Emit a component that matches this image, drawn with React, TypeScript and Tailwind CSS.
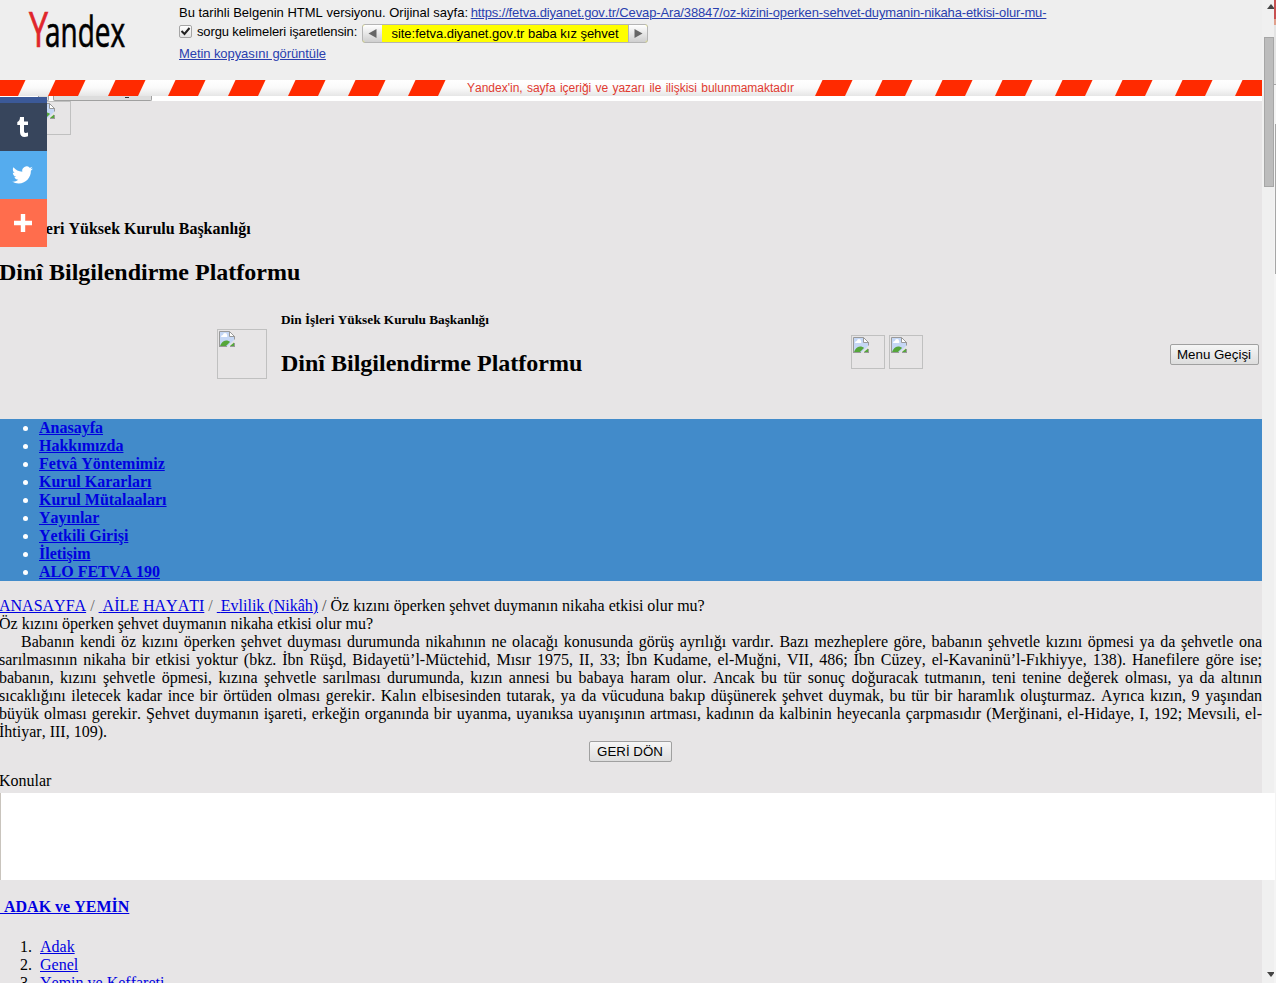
import React from "react";

const menu = [
  'Anasayfa',
  'Hakkımızda',
  'Fetvâ Yöntemimiz',
  'Kurul Kararları',
  'Kurul Mütalaaları',
  'Yayınlar',
  'Yetkili Girişi',
  'İletişim',
  'ALO FETVA 190'
];

const topics = ['Adak', 'Genel', 'Yemin ve Keffareti'];

const answer = [
  'Babanın kendi öz kızını öperken şehvet duyması durumunda nikahının ne olacağı konusunda görüş ayrılığı vardır. Bazı mezheplere göre, babanın şehvetle kızını öpmesi ya da şehvetle ona',
  'sarılmasının nikaha bir etkisi yoktur (bkz. İbn Rüşd, Bidayetü’l-Müctehid, Mısır 1975, II, 33; İbn Kudame, el-Muğni, VII, 486; İbn Cüzey, el-Kavaninü’l-Fıkhiyye, 138). Hanefilere göre ise;',
  'babanın, kızını şehvetle öpmesi, kızına şehvetle sarılması durumunda, kızın annesi bu babaya haram olur. Ancak bu tür sonuç doğuracak tutmanın, teni tenine değerek olması, ya da altının',
  'sıcaklığını iletecek kadar ince bir örtüden olması gerekir. Kalın elbisesinden tutarak, ya da vücuduna bakıp düşünerek şehvet duymak, bu tür bir haramlık oluşturmaz. Ayrıca kızın, 9 yaşından',
  'büyük olması gerekir. Şehvet duymanın işareti, erkeğin organında bir uyanma, uyanıksa uyanışının artması, kadının da kalbinin heyecanla çarpmasıdır (Merğinani, el-Hidaye, I, 192; Mevsıli, el-'
];

const stripes = [-12, 48, 108, 168, 228, 288, 348, 408, 815, 875, 935, 995, 1055, 1115, 1175, 1235];

function BrokenImage({ className }) {
  return (
    <div className={`shrink-0 border border-[#c0c0c0] p-px ${className}`}>
      <svg width="16" height="16" viewBox="0 0 16 16" className="block">
        <path d="M.5.5h10l5 5v3l-7 7h-8z" fill="#c5d7f5" />
        <path d="M2 6a2 2 0 0 1 2-2 2 2 0 0 1 4 0 1.500 1.500 0 0 1 0 2z" fill="#fff" />
        <path d="M1 15c1-3 3-5.500 6-5.500 2 0 3 .5 4 1.500l-4 4z" fill="#55a63a" />
        <path d="M11 15l4-3.500V15z" fill="#55a63a" />
        <path d="M10.500.5v5h5z" fill="#fff" stroke="#999" />
        <path d="M.5 16V.5h10M15.500 5v3.500M0 15.500h8M11 15.500h5M15.500 12v4" fill="none" stroke="#999" />
      </svg>
    </div>
  );
}

function OldButton({ children, className }) {
  return (
    <button className={`h-[21px] shrink-0 rounded-[2px] border border-[#a0a0a0] bg-linear-to-b from-[#f6f6f6] to-[#dddddd] pr-px text-center font-['Liberation_Sans',sans-serif] text-[13.33px] leading-[18px] text-black ${className}`}>
      {children}
    </button>
  );
}

function Tape() {
  return (
    <div className="relative h-4 bg-linear-to-b from-white via-[#fafafa] to-[#e6e6e6]">
      <svg width="1262" height="16" className="block">
        {stripes.map((x) => (
          <polygon key={x} points={`${x},16 ${x + 7.5},0 ${x + 37.5},0 ${x + 30},16`} fill="#ff2a00" />
        ))}
      </svg>
      <div className="absolute left-[467px] top-0 w-[327px] font-['Liberation_Sans',sans-serif] text-[12px] leading-4 text-[#e03a30] [text-align-last:justify] whitespace-nowrap">
        Yandex'in, sayfa içeriği ve yazarı ile ilişkisi bulunmamaktadır
      </div>
    </div>
  );
}

function CacheHeader() {
  return (
    <header className="flex h-20 bg-[#eeeeee] font-['Liberation_Sans',sans-serif] text-[13px] text-black">
      <svg width="179" height="80" className="shrink-0">
        <g fontFamily="'Open Sans', sans-serif" strokeWidth="0.7">
          <text x="29" y="47" fontSize="49" textLength="19" lengthAdjust="spacingAndGlyphs" fill="#e0262b" stroke="#e0262b">Y</text>
          <text x="45" y="47" fontSize="42" textLength="80" lengthAdjust="spacingAndGlyphs" fill="#000" stroke="#000">andex</text>
        </g>
      </svg>
      <div className="pt-1">
        <div className="h-[18px] leading-[18px] whitespace-nowrap">
          Bu tarihli Belgenin HTML versiyonu. Orijinal sayfa:{' '}
          <a className="-ml-px tracking-[-0.13px] text-[#2a3fae] underline">https://fetva.diyanet.gov.tr/Cevap-Ara/38847/oz-kizini-operken-sehvet-duymanin-nikaha-etkisi-olur-mu-</a>
        </div>
        <div className="flex h-[22px] whitespace-nowrap">
          <span className="mt-[3px] flex h-[13px] w-[13px] items-center justify-center rounded-[2px] border border-[#a5a5a5] bg-linear-to-b from-white to-[#e4e4e4]">
            <svg width="11" height="11" viewBox="0 0 11 11"><path d="M1.500 5l3 3L9.500 2" fill="none" stroke="#222" strokeWidth="2" /></svg>
          </span>
          <span className="ml-[5px] w-[165px] tracking-[-0.13px] leading-[20px]">sorgu kelimeleri işaretlensin:</span>
          <div className="mt-[2px] flex h-[19px] w-[286px] overflow-hidden rounded-[3px] border border-[#b5b5b5] bg-[#ffff00]">
            <span className="flex w-[19px] items-center justify-center bg-linear-to-b from-white to-[#cfcfcf]">
              <svg width="9" height="9"><path d="M8.500 0v9L.5 4.500z" fill="#666" /></svg>
            </span>
            <span className="flex-1 text-center tracking-[-0.03px] leading-[17px]">site:fetva.diyanet.gov.tr baba kız şehvet</span>
            <span className="flex w-[19px] items-center justify-center border-l border-[#b5b5b5] bg-linear-to-b from-white to-[#cfcfcf]">
              <svg width="9" height="9"><path d="M.5 0v9l8-4.500z" fill="#666" /></svg>
            </span>
          </div>
        </div>
        <a className="block tracking-[-0.08px] leading-[20px] text-[#2a3fae] underline">Metin kopyasını görüntüle</a>
      </div>
    </header>
  );
}

function ShareBar() {
  return (
    <div className="absolute left-0 top-[97px] w-[47px]">
      <div className="h-[6px] bg-[#3b5998]" />
      <div className="flex h-12 items-center justify-center bg-[#37455c] pr-px">
        <svg width="12" height="20" viewBox="0 0 12 20"><path d="M3 0h4v4.500h4V8H7v6c0 2.200 1.800 2.500 4 1.600v3.600C6.500 21 3 19.500 3 15V8H.3V5C2.200 4.300 2.900 3 3 0z" fill="#fff" /></svg>
      </div>
      <div className="flex h-12 items-center justify-center bg-[#55acee] pr-[2px]">
        <svg width="21" height="22" viewBox="0 0 24 24"><path d="M23.950 4.570a10 10 0 0 1-2.820.77 4.960 4.960 0 0 0 2.160-2.720c-.95.55-2 .96-3.130 1.180a4.920 4.920 0 0 0-8.380 4.480C7.690 8.090 4.070 6.130 1.640 3.160a4.820 4.820 0 0 0-.67 2.480c0 1.710.87 3.210 2.190 4.100a4.900 4.900 0 0 1-2.230-.62v.06a4.920 4.920 0 0 0 3.950 4.830 5 5 0 0 1-2.210.08 4.940 4.940 0 0 0 4.600 3.420A9.870 9.870 0 0 1 0 19.540a14 14 0 0 0 7.550 2.210c9.050 0 14-7.500 14-13.980l-.02-.64a9.940 9.940 0 0 0 2.420-2.560z" fill="#fff" /></svg>
      </div>
      <div className="flex h-12 items-center justify-center bg-[#ff6d4d] pr-px">
        <svg width="18" height="18"><path d="M6.800 0h4.400v6.800H18v4.400h-6.800V18H6.800v-6.800H0V6.800h6.800z" fill="#fff" /></svg>
      </div>
    </div>
  );
}

function SiteHeader() {
  return (
    <>
      <div className="flex h-[5px] bg-white pl-[38px]">
        <div className="h-[5px] w-[11px] rounded-b-[2px] border border-t-0 border-[#a0a0a0] bg-[#dddddd]" />
        <div className="ml-1 flex h-[5px] w-[99px] justify-center rounded-b-[2px] border border-t-0 border-[#a0a0a0] bg-[#dddddd]">
          <div className="ml-12 mt-px h-px w-1 bg-[#333]" />
        </div>
      </div>
      <div className="h-[119px] pl-[37px]">
        <BrokenImage className="h-[34px] w-[34px]" />
      </div>
      <h3 className="h-[18px] text-[16px] leading-[18px] font-bold">Din İşleri Yüksek Kurulu Başkanlığı</h3>
      <h2 className="-ml-px mt-5 h-7 text-[24px] leading-7 font-bold whitespace-nowrap">Dinî Bilgilendirme Platformu</h2>
      <div className="flex h-[133px] pt-[27px]">
        <BrokenImage className="ml-[217px] mt-[16px] h-[50px] w-[50px]" />
        <div className="ml-[14px] w-[570px] shrink-0">
          <h5 className="-mt-px text-[13.28px] leading-[15px] font-bold">Din İşleri Yüksek Kurulu Başkanlığı</h5>
          <h2 className="mt-[22px] text-[24px] leading-7 font-bold">Dinî Bilgilendirme Platformu</h2>
        </div>
        <BrokenImage className="mt-[22px] h-[34px] w-[34px]" />
        <BrokenImage className="ml-1 mt-[22px] h-[34px] w-[34px]" />
        <OldButton className="ml-[247px] mt-[31px] w-[89px]">Menu Geçişi</OldButton>
      </div>
    </>
  );
}

function Scrollbar() {
  return (
    <div className="flex w-[14px] shrink-0 bg-[#f0f0f0]">
      <div className="flex w-3 flex-col items-center">
        <svg width="8" height="5" className="mt-[4px] ml-[5px] shrink-0"><path d="M0 5l4-5 4 5z" fill="#444" /></svg>
        <div className="ml-[2px] mt-[28px] h-[150px] w-[10px] shrink-0 border border-[#a6a6a6] bg-[#bcbcbc]" />
        <svg width="8" height="5" className="mt-auto mb-[6px] ml-[6px] shrink-0"><path d="M0 0h8L4 5z" fill="#444" /></svg>
      </div>
      <div className="w-[2px] bg-[#f4f4f4]">
        <div className="h-[19px] bg-[#c75050]" />
        <div className="h-[6px] bg-[#e0a08c]" />
        <div className="h-[59px] bg-[#e4e4e4]" />
        <div className="h-px bg-[#a6a6a6]" />
        <div className="ml-px mt-[39px] h-[150px] bg-[#a6a6a6]" />
      </div>
    </div>
  );
}

export default function App() {
  return (
    <div className="relative flex h-[983px] w-[1276px] overflow-hidden bg-[#e7e5e6] font-['Liberation_Serif',serif] text-[16px] leading-[18px] text-black [font-kerning:none]">
      <div className="w-[1262px] shrink-0">
        <CacheHeader />
        <Tape />
        <SiteHeader />
        <ul className="h-[162px] list-disc bg-[#428bca] pl-[39px] font-bold text-white">
          {menu.map((item) => (
            <li key={item}><a className="text-[#0000e0] underline">{item}</a></li>
          ))}
        </ul>
        <div className="-ml-px mt-4 whitespace-pre">
          <a className="text-[#0000e0] underline">ANASAYFA</a>
          <span className="text-[#666]"> / </span>
          <a className="text-[#0000e0] underline">{'\u00a0'}AİLE HAYATI</a>
          <span className="text-[#666]"> / </span>
          <a className="text-[#0000e0] underline">{'\u00a0'}Evlilik (Nikâh)</a>
          <span className="text-[#444]"> / </span>
          Öz kızını öperken şehvet duymanın nikaha etkisi olur mu?
        </div>
        <div className="-ml-px">Öz kızını öperken şehvet duymanın nikaha etkisi olur mu?</div>
        <div className="-ml-px [text-align-last:justify] whitespace-nowrap">
          {answer.map((line, i) => (
            <p key={i} className={i === 0 ? 'pl-[22px]' : ''}>{line}</p>
          ))}
        </div>
        <p className="-ml-px">İhtiyar, III, 109).</p>
        <div className="flex h-[31px] pl-[589px]">
          <OldButton className="w-[83px]">GERİ DÖN</OldButton>
        </div>
        <div className="-ml-px h-[21px]">Konular</div>
        <div className="relative h-[87px] w-[1275px] border-l border-[#c9c4bd] bg-white" />
        <h4 className="mt-[18px] font-bold"><a className="text-[#0000e0] underline">{'\u00a0'}ADAK ve YEMİN</a></h4>
        <ol className="mt-[22px] pl-5">
          {topics.map((topic, i) => (
            <li key={topic} className="flex">
              <span className="w-5">{i + 1}.</span>
              <a className="text-[#0000e0] underline">{topic}</a>
            </li>
          ))}
        </ol>
      </div>
      <Scrollbar />
      <ShareBar />
    </div>
  );
}
